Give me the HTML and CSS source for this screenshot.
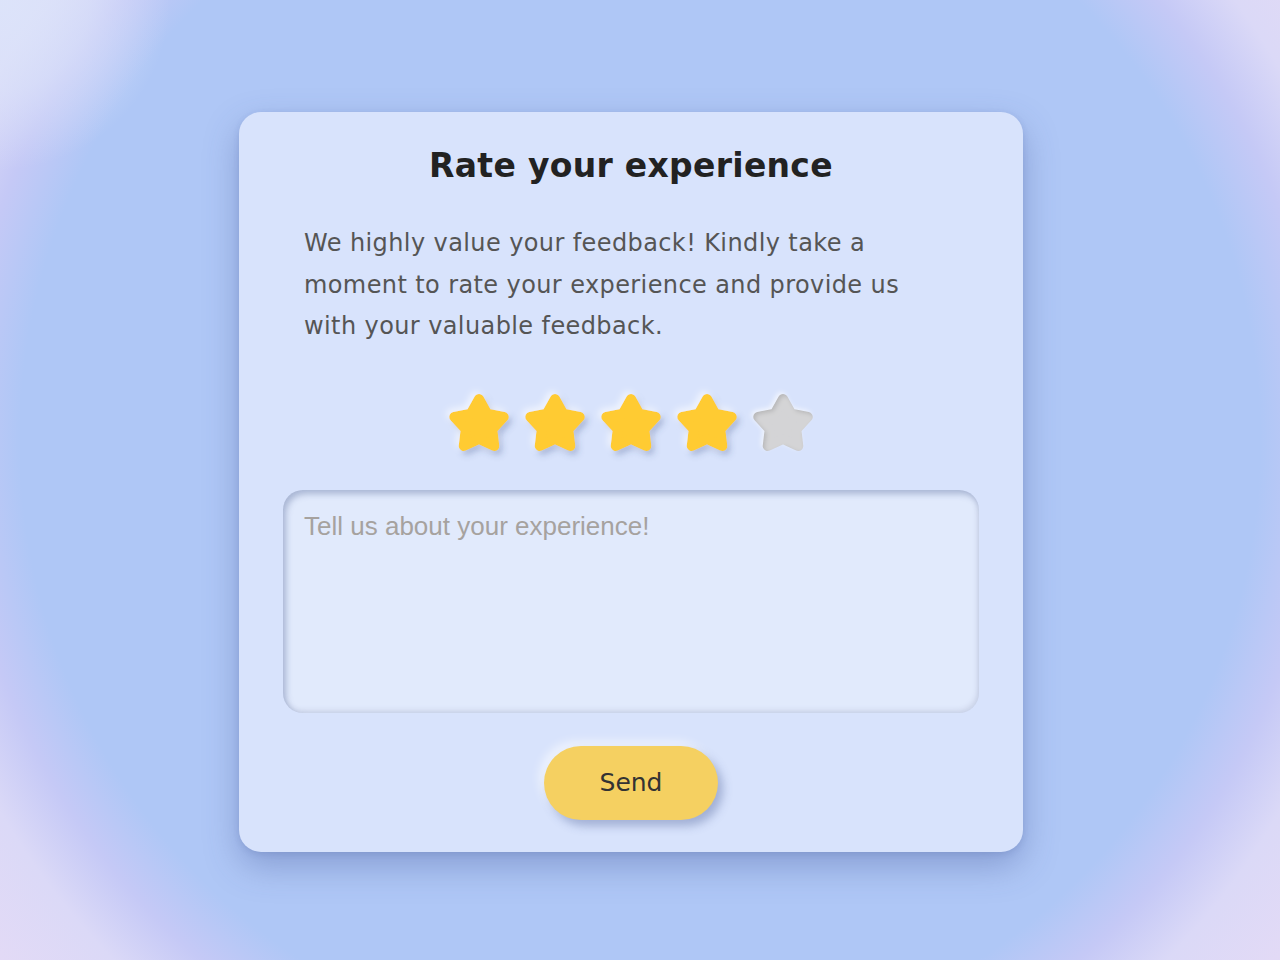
FILE: index.html
```html
<!DOCTYPE html>
<html lang="en">
<head>
<meta charset="utf-8">
<title>Rate your experience</title>
<link rel="stylesheet" href="styles.css">
</head>
<body>
<svg class="defs" width="0" height="0" aria-hidden="true">
  <defs>
    <filter id="lift" x="-40%" y="-40%" width="180%" height="180%">
      <feGaussianBlur in="SourceAlpha" stdDeviation="3"/>
      <feOffset dx="3" dy="4" result="b"/>
      <feFlood flood-color="#3b4f86" flood-opacity="0.3"/>
      <feComposite in2="b" operator="in" result="dark"/>
      <feGaussianBlur in="SourceAlpha" stdDeviation="3"/>
      <feOffset dx="-3" dy="-3" result="c"/>
      <feFlood flood-color="#ffffff" flood-opacity="0.6"/>
      <feComposite in2="c" operator="in" result="light"/>
      <feMerge><feMergeNode in="light"/><feMergeNode in="dark"/><feMergeNode in="SourceGraphic"/></feMerge>
    </filter>
    <filter id="sunk" x="-40%" y="-40%" width="180%" height="180%">
      <feComponentTransfer in="SourceAlpha" result="inv"><feFuncA type="table" tableValues="1 0"/></feComponentTransfer>
      <feGaussianBlur in="inv" stdDeviation="2"/>
      <feOffset dx="2" dy="2" result="ib"/>
      <feFlood flood-color="#000000" flood-opacity="0.28"/>
      <feComposite in2="ib" operator="in"/>
      <feComposite in2="SourceAlpha" operator="in" result="inner"/>
      <feGaussianBlur in="SourceAlpha" stdDeviation="2"/>
      <feOffset dx="-2" dy="-2" result="c"/>
      <feFlood flood-color="#ffffff" flood-opacity="0.6"/>
      <feComposite in2="c" operator="in" result="light"/>
      <feMerge><feMergeNode in="light"/><feMergeNode in="SourceGraphic"/><feMergeNode in="inner"/></feMerge>
    </filter>
  </defs>
</svg>
<main class="page">
  <section class="card">
    <h1 class="title">Rate your experience</h1>
    <p class="intro">We highly value your feedback! Kindly take a moment to rate your experience and provide us with your valuable feedback.</p>
    <div class="stars">
      <svg class="star on" viewBox="0 0 64 62" width="64" height="62"><polygon points="32,7 40.23,21.67 56.73,24.97 45.31,37.33 47.28,54.03 32,47 16.72,54.03 18.69,37.33 7.27,24.97 23.77,21.67"/></svg>
      <svg class="star on" viewBox="0 0 64 62" width="64" height="62"><polygon points="32,7 40.23,21.67 56.73,24.97 45.31,37.33 47.28,54.03 32,47 16.72,54.03 18.69,37.33 7.27,24.97 23.77,21.67"/></svg>
      <svg class="star on" viewBox="0 0 64 62" width="64" height="62"><polygon points="32,7 40.23,21.67 56.73,24.97 45.31,37.33 47.28,54.03 32,47 16.72,54.03 18.69,37.33 7.27,24.97 23.77,21.67"/></svg>
      <svg class="star on" viewBox="0 0 64 62" width="64" height="62"><polygon points="32,7 40.23,21.67 56.73,24.97 45.31,37.33 47.28,54.03 32,47 16.72,54.03 18.69,37.33 7.27,24.97 23.77,21.67"/></svg>
      <svg class="star off" viewBox="0 0 64 62" width="64" height="62"><polygon points="32,7 40.23,21.67 56.73,24.97 45.31,37.33 47.28,54.03 32,47 16.72,54.03 18.69,37.33 7.27,24.97 23.77,21.67"/></svg>
    </div>
    <textarea class="comment" placeholder="Tell us about your experience!"></textarea>
    <button class="send" type="button">Send</button>
  </section>
</main>
</body>
</html>
```

FILE: styles.css
```css
html, body {
  margin: 0;
  padding: 0;
}

body {
  min-height: 100vh;
  font-family: "DejaVu Sans", "Liberation Sans", sans-serif;
  background:
    radial-gradient(circle at 0 0, rgba(220, 228, 250, 0.95) 0, rgba(220, 228, 250, 0.6) 90px, rgba(220, 228, 250, 0) 170px),
    radial-gradient(circle at 640px 440px, #afc7f6 0, #afc7f6 620px, #c5c9f6 680px, #dbd9f7 740px, #e3daf6 830px);
  background-color: #e3daf6;
}

.defs {
  position: absolute;
  width: 0;
  height: 0;
  overflow: hidden;
}

.page {
  min-height: 100vh;
  box-sizing: border-box;
  padding: 4px 18px 0 0;
  display: flex;
  align-items: center;
  justify-content: center;
}

.card {
  width: 784px;
  box-sizing: border-box;
  padding: 34px 44px 32px;
  background: #d8e3fc;
  border-radius: 22px;
  box-shadow: 0 14px 34px rgba(60, 80, 145, 0.35), 0 2px 6px rgba(60, 80, 145, 0.15);
  display: flex;
  flex-direction: column;
  align-items: center;
}

.title {
  margin: 0;
  font-size: 33px;
  line-height: 40px;
  letter-spacing: 0.3px;
  font-weight: 700;
  color: #222222;
  text-align: center;
}

.intro {
  align-self: stretch;
  margin: 37px 21px 0;
  font-size: 24px;
  line-height: 41.5px;
  letter-spacing: 0.4px;
  color: #555555;
}

.stars {
  margin-top: 44px;
  display: flex;
  gap: 12px;
}

.star {
  display: block;
  overflow: visible;
}

.star polygon {
  stroke-width: 10;
  stroke-linejoin: round;
}

.star.on polygon {
  fill: #ffcb33;
  stroke: #ffcb33;
  filter: url(#lift);
}

.star.off polygon {
  fill: #d4d4d6;
  stroke: #d4d4d6;
  filter: url(#sunk);
}

.comment {
  align-self: stretch;
  margin-top: 36px;
  height: 223px;
  box-sizing: border-box;
  padding: 21px 21px;
  border: none;
  outline: none;
  resize: none;
  border-radius: 20px;
  background: #e1eafc;
  font-family: "Liberation Sans", Arial, sans-serif;
  font-size: 26px;
  color: #444444;
  box-shadow: inset 3px 4px 6px rgba(70, 90, 140, 0.35), inset -2px -3px 5px rgba(120, 130, 160, 0.18);
}

.comment::placeholder {
  color: #a6a29f;
}

.send {
  margin-top: 33px;
  width: 174px;
  height: 74px;
  border: none;
  border-radius: 37px;
  background: #f5d061;
  font-family: "DejaVu Sans", sans-serif;
  font-size: 25px;
  color: #333333;
  cursor: pointer;
  box-shadow: 5px 6px 10px rgba(60, 80, 140, 0.35), -5px -5px 10px rgba(255, 255, 255, 0.55);
}
```
